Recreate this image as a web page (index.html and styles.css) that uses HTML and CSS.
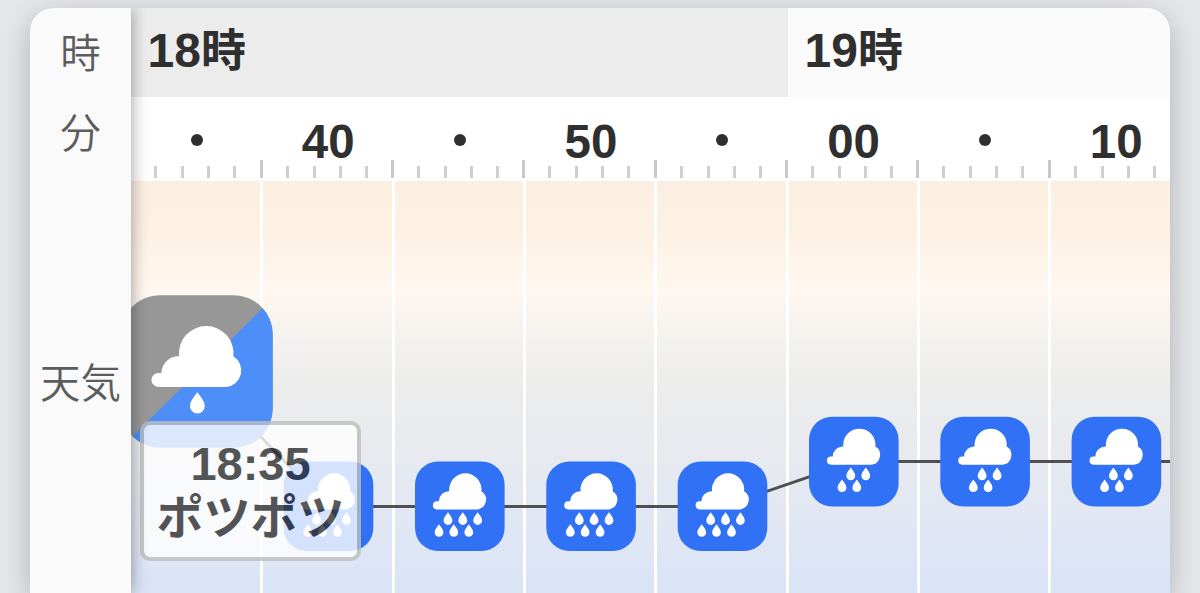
FILE: index.html
```
<!DOCTYPE html>
<html lang="ja">
<head>
<meta charset="utf-8">
<title>天気</title>
<link rel="stylesheet" href="styles.css">
</head>
<body>
<main class="card">
  <aside class="labels">
    <div class="label label-hour">時</div>
    <div class="label label-minute">分</div>
    <div class="label label-weather">天気</div>
  </aside>
  <section class="timeline">
    <div class="hours">
      <div class="hour hour-current">18<span class="unit">時</span></div>
      <div class="hour">19<span class="unit">時</span></div>
    </div>
    <div class="minutes">
      <div class="minute"><i class="dot"></i></div>
      <div class="minute">40</div>
      <div class="minute"><i class="dot"></i></div>
      <div class="minute">50</div>
      <div class="minute"><i class="dot"></i></div>
      <div class="minute">00</div>
      <div class="minute"><i class="dot"></i></div>
      <div class="minute">10</div>
    </div>
    <div class="chart">
      <svg class="plot" width="1039" height="412" viewBox="131 181 1039 412">
        <defs>
          <path id="cloud" fill="#fff" d="M22 47.9A4.1 4.1 0 0 1 22 39.7H23.8A10 10 0 0 1 34.3 29.8A16.15 16.15 0 1 1 66.4 29.8A9.8 9.8 0 0 1 62.2 47.9Z"/>
          <path id="drop" fill="#fff" d="M0 0C1.8 2.4 4.4 5.5 4.4 8.2A4.4 4.4 0 0 1-4.4 8.2C-4.4 5.5-1.8 2.4 0 0Z"/>
          <g id="rain">
            <rect width="89.6" height="89.6" rx="23" fill="#3071f6"/>
            <use href="#cloud"/>
          </g>
          <g id="heavy">
            <use href="#rain"/>
            <use href="#drop" x="33" y="50.8"/><use href="#drop" x="47.8" y="50.8"/><use href="#drop" x="62.7" y="50.8"/>
            <use href="#drop" x="24" y="62.7"/><use href="#drop" x="38.8" y="62.7"/><use href="#drop" x="53.8" y="62.7"/>
          </g>
          <g id="light">
            <use href="#rain"/>
            <use href="#drop" x="41.8" y="50.8"/><use href="#drop" x="56.8" y="50.8"/>
            <use href="#drop" x="33" y="62.7"/><use href="#drop" x="47.8" y="62.7"/>
          </g>
          <clipPath id="big"><rect x="120.7" y="295.3" width="152" height="152.2" rx="39"/></clipPath>
        </defs>
        <path d="M196.7 371L328.7 506.5H722.5L853.8 461.5H1170" fill="none" stroke="#505052" stroke-width="3"/>
        <use href="#heavy" x="283.7" y="461.5"/>
        <use href="#heavy" x="415" y="461.5"/>
        <use href="#heavy" x="546.3" y="461.5"/>
        <use href="#heavy" x="677.7" y="461.5"/>
        <use href="#light" x="809" y="416.8"/>
        <use href="#light" x="940.3" y="416.8"/>
        <use href="#light" x="1071.6" y="416.8"/>
        <g clip-path="url(#big)">
          <path fill="#979797" d="M120 295H275V449H120Z"/>
          <path fill="#4d8ef8" d="M276 295V449H119.5Z"/>
        </g>
        <g transform="translate(121.2 306) scale(1.689)">
          <use href="#cloud"/>
          <use href="#drop" x="45.1" y="51"/>
        </g>
      </svg>
      <div class="tooltip"><span>18:35</span><span class="kana">ポツポツ</span></div>
    </div>
  </section>
</main>
</body>
</html>
```
FILE: styles.css
```
* { box-sizing: border-box; }

body {
  margin: 0;
  height: 593px;
  overflow: hidden;
  padding: 8px 30px 0;
  background: #e6e7eb;
  color: #2f2f2f;
  font-family: "Liberation Sans", "Noto Sans CJK JP", sans-serif;
}

.card {
  display: flex;
  width: 1140px;
  height: 585px;
  border-radius: 24px 24px 0 0;
  box-shadow: 0 8px 30px rgba(0, 0, 0, .24);
  background: #fff;
  overflow: hidden;
}

.labels {
  position: relative;
  z-index: 1;
  flex: none;
  width: 101px;
  background: #fafafa;
  box-shadow: 0 0 16px rgba(0, 0, 0, .4);
  color: #5c5c5c;
  font: 350 40.5px/60px "Noto Sans CJK JP", "Noto Sans CJK JP DemiLight", sans-serif;
  text-align: center;
}
.label-hour { padding-top: 13px; }
.label-minute { padding-top: 20px; }
.label-weather { padding-top: 190px; }

.timeline { width: 1039px; }

.hours { display: flex; height: 89px; }
.hour {
  flex: 1;
  padding-left: 16.5px;
  background: #fafafa;
  font-size: 48px;
  font-weight: 700;
  line-height: 86px;
}
.hour-current { flex: none; width: 657px; background: #ececec; }
.unit { font-size: 45px; line-height: 1; }

.minutes {
  display: flex;
  height: 84px;
  margin-left: .3px;
  background: #fff;
}
.minute {
  flex: none;
  display: flex;
  justify-content: center;
  align-items: flex-start;
  width: 131.33px;
  height: 81px;
  padding-top: 15px;
  font-size: 47.5px;
  font-weight: 700;
  line-height: 60px;
  background:
    linear-gradient(#c9c9c9, #c9c9c9) right bottom / 3px 18px no-repeat,
    repeating-linear-gradient(90deg, transparent 0 23.27px, #cfcfcf 23.27px 26.27px) 0 bottom / 127px 12px no-repeat;
}
.dot { width: 12px; height: 12px; margin-top: 22px; border-radius: 50%; background: #2f2f2f; }

.chart {
  position: relative;
  height: 412px;
  background:
    repeating-linear-gradient(90deg, transparent 0 128.33px, #fff 128.33px 131.33px) .5px 0 / 1060px 100% no-repeat,
    linear-gradient(#fcefe1 0, #fdf1e3 50px, #fff7f0 110px, #f2f1ef 165px, #ececec 212px, #e8eaef 270px, #dbe4f7 400px);
}
.plot { display: block; }

.tooltip {
  position: absolute;
  left: 9px;
  top: 240px;
  display: flex;
  flex-direction: column;
  align-items: center;
  width: 221px;
  height: 140px;
  padding-top: 14px;
  border: 4px solid #bfbfbf;
  border-radius: 10px;
  background: #fff;
  opacity: .8;
  font-size: 47px;
  font-weight: 700;
  line-height: 50px;
  white-space: nowrap;
}
.kana { font-family: "Noto Sans CJK JP", sans-serif; line-height: 50px; }
```
